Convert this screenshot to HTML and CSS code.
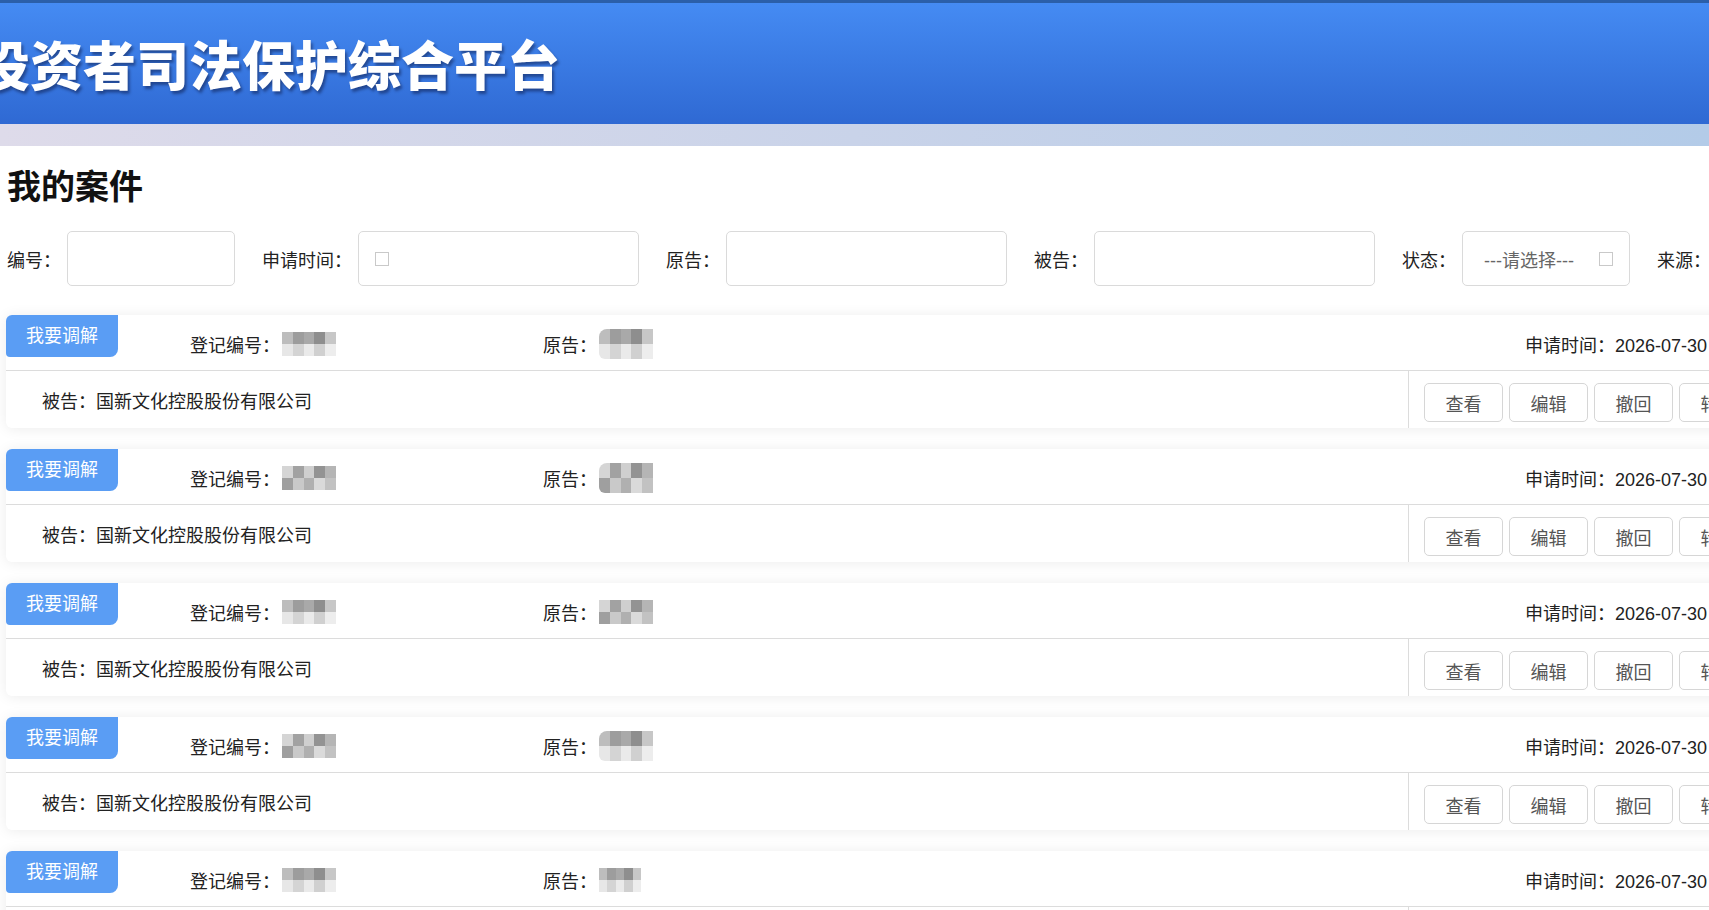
FILE: index.html
```html
<!DOCTYPE html>
<html>
  <head>
    <meta charset="utf-8">
    <title>我的案件 - 投资者司法保护综合平台</title>
    <link rel="stylesheet" href="styles.css">
  </head>
  <body>
    <!-- top banner -->
    <div class="header">
      <h1 class="site-title">投资者司法保护综合平台</h1>
    </div>
    <div class="band"></div>

    <div class="content">
      <h2 class="page-title">我的案件</h2>

      <!-- search filters -->
      <div class="filters">
        <span class="filter-label">编号：</span>
        <div class="filter-input short"></div>
        <span class="filter-label">申请时间：</span>
        <div class="filter-input wide"><span class="tiny-box"></span></div>
        <span class="filter-label">原告：</span>
        <div class="filter-input wide"></div>
        <span class="filter-label">被告：</span>
        <div class="filter-input wide"></div>
        <span class="filter-label">状态：</span>
        <div class="filter-input short select">
          <span class="placeholder">---请选择---</span>
          <span class="tiny-box"></span>
        </div>
        <span class="filter-label">来源：</span>
        <div class="filter-input short"></div>
      </div>

      <!-- case list -->
      <div class="case-list">
        <div class="case-card">
          <div class="case-head">
            <div class="badge">我要调解</div>
            <div class="reg-no">登记编号：<span class="mosaic"></span></div>
            <div class="plaintiff">原告：<span class="mosaic tall"></span></div>
            <div class="apply-time">申请时间：2026-07-30 10:21:36</div>
          </div>
          <div class="case-body">
            <div class="defendant">被告：国新文化控股股份有限公司</div>
            <div class="ops">
              <button class="op-btn">查看</button>
              <button class="op-btn">编辑</button>
              <button class="op-btn">撤回</button>
              <button class="op-btn">转交</button>
            </div>
          </div>
        </div>

        <div class="case-card">
          <div class="case-head">
            <div class="badge">我要调解</div>
            <div class="reg-no">登记编号：<span class="mosaic alt"></span></div>
            <div class="plaintiff">原告：<span class="mosaic tall alt"></span></div>
            <div class="apply-time">申请时间：2026-07-30 10:15:02</div>
          </div>
          <div class="case-body">
            <div class="defendant">被告：国新文化控股股份有限公司</div>
            <div class="ops">
              <button class="op-btn">查看</button>
              <button class="op-btn">编辑</button>
              <button class="op-btn">撤回</button>
              <button class="op-btn">转交</button>
            </div>
          </div>
        </div>

        <div class="case-card">
          <div class="case-head">
            <div class="badge">我要调解</div>
            <div class="reg-no">登记编号：<span class="mosaic"></span></div>
            <div class="plaintiff">原告：<span class="mosaic alt"></span></div>
            <div class="apply-time">申请时间：2026-07-30 09:58:47</div>
          </div>
          <div class="case-body">
            <div class="defendant">被告：国新文化控股股份有限公司</div>
            <div class="ops">
              <button class="op-btn">查看</button>
              <button class="op-btn">编辑</button>
              <button class="op-btn">撤回</button>
              <button class="op-btn">转交</button>
            </div>
          </div>
        </div>

        <div class="case-card">
          <div class="case-head">
            <div class="badge">我要调解</div>
            <div class="reg-no">登记编号：<span class="mosaic alt"></span></div>
            <div class="plaintiff">原告：<span class="mosaic tall"></span></div>
            <div class="apply-time">申请时间：2026-07-30 09:40:13</div>
          </div>
          <div class="case-body">
            <div class="defendant">被告：国新文化控股股份有限公司</div>
            <div class="ops">
              <button class="op-btn">查看</button>
              <button class="op-btn">编辑</button>
              <button class="op-btn">撤回</button>
              <button class="op-btn">转交</button>
            </div>
          </div>
        </div>

        <div class="case-card">
          <div class="case-head">
            <div class="badge">我要调解</div>
            <div class="reg-no">登记编号：<span class="mosaic"></span></div>
            <div class="plaintiff">原告：<span class="mosaic narrow"></span></div>
            <div class="apply-time">申请时间：2026-07-30 09:12:55</div>
          </div>
          <div class="case-body">
            <div class="defendant">被告：国新文化控股股份有限公司</div>
            <div class="ops">
              <button class="op-btn">查看</button>
              <button class="op-btn">编辑</button>
              <button class="op-btn">撤回</button>
              <button class="op-btn">转交</button>
            </div>
          </div>
        </div>
      </div>
    </div>
  </body>
</html>
```

FILE: styles.css
```css
/* page base */
body {
  margin: 0;
  font-family: "Liberation Sans", "Noto Sans CJK SC", sans-serif;
  font-size: 18px;
  color: #222;
  background-color: #fff;
  overflow: hidden;
}

/* banner */
.header {
  height: 121px;
  border-top: 3px solid #2b5fa9;
  background: linear-gradient(#458bf3, #2f69d3);
  display: flex;
  align-items: center;
  overflow: hidden;
}

.site-title {
  margin: 0 0 0 -23px;
  font-family: "Noto Sans CJK SC", sans-serif;
  font-size: 53px;
  font-weight: 900;
  line-height: 1;
  color: #fff;
  white-space: nowrap;
  text-shadow: 2px 3px 3px rgba(0, 0, 30, 0.4);
}

.band {
  height: 22px;
  background: linear-gradient(to right, #dedbea, #c9d3e9 50%, #b3cbe8);
}

.content {
  width: 1900px;
  padding-left: 6px;
}

.page-title {
  margin: 21px 0 0 1px;
  font-size: 34px;
  line-height: 40px;
  font-weight: 700;
  color: #111;
}

/* filters */
.filters {
  display: flex;
  align-items: center;
  margin: 24px 0 0 1px;
}

.filter-label {
  margin-right: 6px;
  white-space: nowrap;
}

.filter-input {
  box-sizing: border-box;
  height: 55px;
  margin-right: 27px;
  border: 1px solid #dadada;
  border-radius: 5px;
  background-color: #fff;
  display: flex;
  align-items: center;
  flex-shrink: 0;
}

.filter-input.short {
  width: 168px;
}

.filter-input.wide {
  width: 281px;
  padding-left: 16px;
}

.filter-input.select {
  padding: 0 16px 0 21px;
  justify-content: space-between;
}

.placeholder {
  color: #666;
}

.tiny-box {
  width: 12px;
  height: 12px;
  border: 1px solid #c9c9c9;
}

/* case cards */
.case-list {
  margin-top: 29px;
}

.case-card {
  width: 1880px;
  margin-bottom: 21px;
  background-color: #fff;
  border-radius: 6px;
  box-shadow: 0 1px 14px rgba(0, 0, 0, 0.08);
}

.case-head {
  display: flex;
  align-items: center;
  height: 55px;
  border-bottom: 1px solid #dcdcdc;
}

.badge {
  align-self: flex-start;
  width: 112px;
  height: 42px;
  line-height: 42px;
  text-align: center;
  color: #fff;
  background-color: #5a9df4;
  border-radius: 6px 0 8px 4px;
}

.reg-no,
.plaintiff {
  display: flex;
  align-items: center;
  padding-top: 3px;
}

.reg-no {
  width: 353px;
  margin-left: 72px;
}

.plaintiff {
  width: 982px;
}

.apply-time {
  padding-top: 3px;
  white-space: nowrap;
}

.case-body {
  display: flex;
  height: 57px;
}

.defendant {
  width: 1366px;
  padding-left: 36px;
  display: flex;
  align-items: center;
}

.ops {
  display: flex;
  gap: 6px;
  padding: 12px 0 0 15px;
  border-left: 1px solid #dcdcdc;
}

.op-btn {
  width: 79px;
  height: 39px;
  padding: 0;
  font-family: inherit;
  font-size: 18px;
  color: #555;
  background-color: #fff;
  border: 1px solid #d6d6d6;
  border-radius: 5px;
}

/* pixelated names */
.mosaic {
  display: inline-block;
  width: 54px;
  height: 24px;
  margin-left: 2px;
  filter: blur(0.6px);
  background:
    linear-gradient(to right, #bdbdbd 0 20%, #9d9d9d 20% 40%, #a9a9a9 40% 60%, #8e8e8e 60% 80%, #c7c7c7 80%) top / 100% 50% no-repeat,
    linear-gradient(to right, #e7e7e7 0 20%, #d4d4d4 20% 40%, #eaeaea 40% 60%, #d0d0d0 60% 80%, #ededed 80%) bottom / 100% 50% no-repeat;
}

.mosaic.alt {
  background:
    linear-gradient(to right, #d5d5d5 0 20%, #a2a2a2 20% 40%, #cfcfcf 40% 60%, #939393 60% 80%, #b5b5b5 80%) top / 100% 50% no-repeat,
    linear-gradient(to right, #9f9f9f 0 20%, #c9c9c9 20% 40%, #b0b0b0 40% 60%, #dadada 60% 80%, #c2c2c2 80%) bottom / 100% 50% no-repeat;
}

.mosaic.tall {
  height: 30px;
  border-radius: 8px 0 0 6px;
}

.mosaic.narrow {
  width: 42px;
}
```
